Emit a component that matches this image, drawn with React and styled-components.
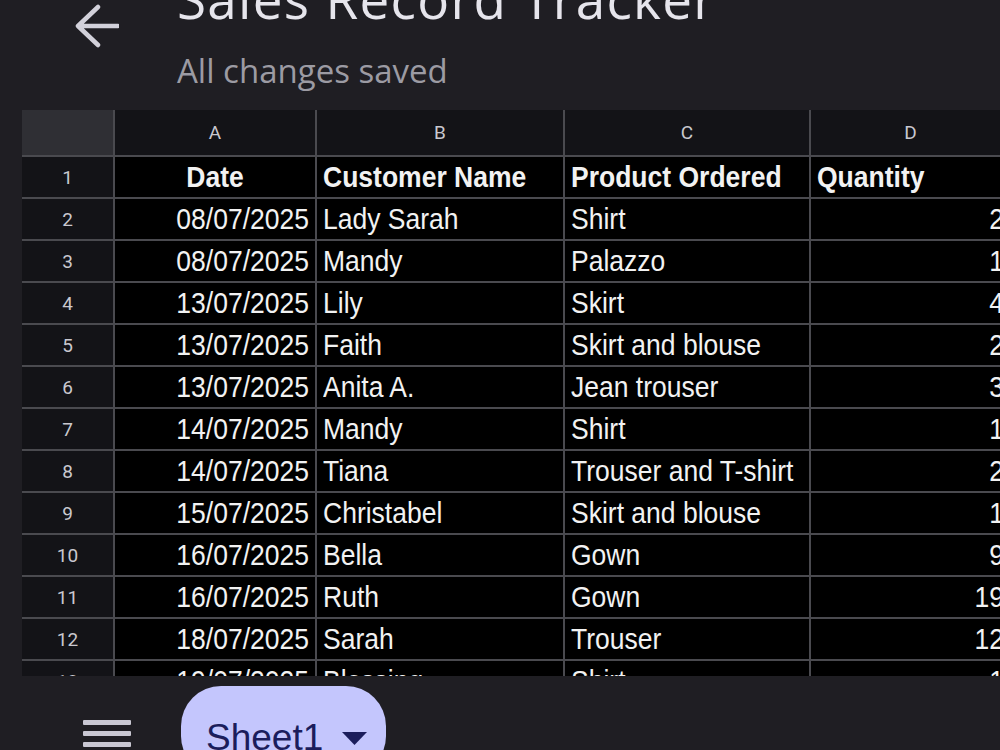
import React from 'react';
import styled, { createGlobalStyle } from 'styled-components';

const GlobalStyle = createGlobalStyle`
  html, body {
    margin: 0;
    padding: 0;
    background: #1f1e23;
    font-family: Roboto, "Liberation Sans", Arial, sans-serif;
  }
`;

const Page = styled.div`
  width: 1000px;
  height: 750px;
  overflow: hidden;
  display: flex;
  flex-direction: column;
  background: #1f1e23;
`;

const TopBar = styled.header`
  height: 110px;
  flex-shrink: 0;
  display: flex;
  align-items: flex-start;
  padding-left: 75px;
  gap: 58px;
`;

const BackButton = styled.button`
  width: 44px;
  height: 44px;
  margin-top: 4px;
  padding: 0;
  border: none;
  background: transparent;
  color: #d2d1da;
  display: flex;
`;

const TitleBlock = styled.div`
  display: flex;
  flex-direction: column;
`;

const Title = styled.h1`
  margin: -25px 0 0;
  font-family: "Open Sans", Roboto, sans-serif;
  font-size: 53px;
  letter-spacing: 1.3px;
  line-height: 48px;
  font-weight: 400;
  color: #e6e5ec;
  white-space: nowrap;
`;

const Subtitle = styled.div`
  margin-top: 31px;
  font-family: "Open Sans", Roboto, sans-serif;
  font-size: 33px;
  line-height: 33px;
  color: #9c9ba3;
`;

const SheetArea = styled.div`
  height: 566px;
  flex-shrink: 0;
  overflow: hidden;
  padding-left: 22px;
`;

const Grid = styled.div`
  display: grid;
  grid-template-columns: 91px 200px 246px 244px 199px;
  grid-template-rows: 45px;
  grid-auto-rows: 40px;
  gap: 2px;
  width: max-content;
  background: #4a4a4f;
`;

const Corner = styled.div`
  background: #2f2f34;
`;

const HeadCell = styled.div`
  background: #131317;
  color: #c9c8cf;
  font-size: 19px;
  display: flex;
  align-items: center;
  justify-content: center;
`;

const Cell = styled.div`
  background: #000;
  color: #f2f2f2;
  font-family: "Liberation Sans", Arial, sans-serif;
  font-size: 26.5px;
  font-weight: ${(p) => (p.$bold ? 700 : 400)};
  display: flex;
  align-items: center;
  justify-content: ${(p) =>
    p.$align === 'right' ? 'flex-end' : p.$align === 'center' ? 'center' : 'flex-start'};
  padding: 0 6px;
  white-space: nowrap;
  overflow: hidden;
`;

const CellText = styled.span`
  display: inline-block;
  transform: scaleY(1.1);
`;

const BottomBar = styled.footer`
  flex: 1;
  display: flex;
  align-items: flex-start;
  padding-left: 83px;
`;

const MenuButton = styled.div`
  margin-top: 44px;
  width: 48px;
  display: flex;
  flex-direction: column;
  gap: 6px;
`;

const MenuBar = styled.span`
  height: 5px;
  background: #c9c7d2;
  border-radius: 1px;
`;

const SheetTab = styled.div`
  margin-left: 50px;
  margin-top: 10px;
  height: 90px;
  box-sizing: border-box;
  padding: 32px 19px 0 25px;
  border-radius: 40px;
  background: #c4c6fd;
  color: #1b1d5c;
  display: flex;
  align-items: flex-start;
  gap: 19px;
`;

const TabLabel = styled.span`
  font-family: "Liberation Sans", Arial, sans-serif;
  font-size: 37px;
  line-height: 40px;
`;

const Caret = styled.svg`
  margin-top: 14px;
`;

const columns = ['A', 'B', 'C', 'D'];

const rows = [
  ['08/07/2025', 'Lady Sarah', 'Shirt', '2'],
  ['08/07/2025', 'Mandy', 'Palazzo', '1'],
  ['13/07/2025', 'Lily', 'Skirt', '4'],
  ['13/07/2025', 'Faith', 'Skirt and blouse', '2'],
  ['13/07/2025', 'Anita A.', 'Jean trouser', '3'],
  ['14/07/2025', 'Mandy', 'Shirt', '1'],
  ['14/07/2025', 'Tiana', 'Trouser and T-shirt', '2'],
  ['15/07/2025', 'Christabel', 'Skirt and blouse', '1'],
  ['16/07/2025', 'Bella', 'Gown', '9'],
  ['16/07/2025', 'Ruth', 'Gown', '19'],
  ['18/07/2025', 'Sarah', 'Trouser', '12'],
  ['19/07/2025', 'Blessing', 'Shirt', '1'],
];

export default function App() {
  return (
    <>
      <GlobalStyle />
      <Page>
        <TopBar>
          <BackButton aria-label="Back">
            <svg width="44" height="44" viewBox="0 0 44 44" fill="none">
              <path
                d="M3 22H43M3 22L23 3M3 22L23 41"
                stroke="currentColor"
                strokeWidth="4.5"
                strokeLinecap="round"
                strokeLinejoin="round"
              />
            </svg>
          </BackButton>
          <TitleBlock>
            <Title>Sales Record Tracker</Title>
            <Subtitle>All changes saved</Subtitle>
          </TitleBlock>
        </TopBar>

        <SheetArea>
          <Grid>
            <Corner />
            {columns.map((c) => (
              <HeadCell key={c}>{c}</HeadCell>
            ))}

            <HeadCell>1</HeadCell>
            <Cell $bold $align="center"><CellText>Date</CellText></Cell>
            <Cell $bold><CellText>Customer Name</CellText></Cell>
            <Cell $bold><CellText>Product Ordered</CellText></Cell>
            <Cell $bold><CellText>Quantity</CellText></Cell>

            {rows.map((r, i) => (
              <React.Fragment key={i}>
                <HeadCell>{i + 2}</HeadCell>
                <Cell $align="right"><CellText>{r[0]}</CellText></Cell>
                <Cell><CellText>{r[1]}</CellText></Cell>
                <Cell><CellText>{r[2]}</CellText></Cell>
                <Cell $align="right"><CellText>{r[3]}</CellText></Cell>
              </React.Fragment>
            ))}
          </Grid>
        </SheetArea>

        <BottomBar>
          <MenuButton>
            <MenuBar />
            <MenuBar />
            <MenuBar />
          </MenuButton>
          <SheetTab>
            <TabLabel>Sheet1</TabLabel>
            <Caret width="25" height="13" viewBox="0 0 25 13">
              <path d="M0 0H25L12.5 13Z" fill="currentColor" />
            </Caret>
          </SheetTab>
        </BottomBar>
      </Page>
    </>
  );
}
